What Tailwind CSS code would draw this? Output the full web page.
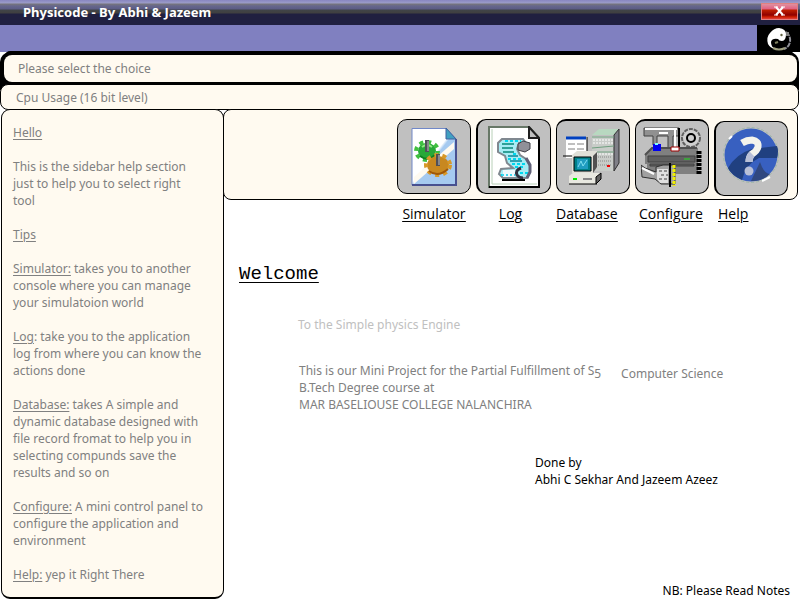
<!DOCTYPE html>
<html lang="en">
<head>
<meta charset="utf-8">
<meta name="viewport" content="width=device-width, initial-scale=1">
<title>Physicode - By Abhi &amp; Jazeem</title>
<script src="https://cdn.jsdelivr.net/npm/@tailwindcss/browser@4"></script>
</head>
<body class="flex min-h-screen flex-col bg-white font-['Noto_Sans',sans-serif] text-[12px] leading-[17px] text-[#808080]">
<header>
  <div class="flex h-[25px] items-center justify-between bg-[linear-gradient(to_bottom,#8886c0_0px,#9c9cc8_3px,#77757b_4px,#66668c_6px,#5c5c84_9px,#404448_10px,#404040_13px,#202040_14px,#202040_25px)] pl-[23px] pr-[2px]">
    <h1 class="font-['Noto_Sans',sans-serif] text-[13px] font-bold text-white">Physicode - By Abhi &amp; Jazeem</h1>
    <button type="button" aria-label="Close" class="mb-[3px] flex h-[17px] w-[37px] items-center justify-center border border-[#e08080] bg-[linear-gradient(to_bottom,#e090a0_0px,#e06080_5px,#c02000_6px,#900000_11px,#d02000_13px,#e04040_15px)]">
      <svg class="h-[10px] w-[11px]" viewBox="0 0 11 10" fill="none" stroke="#fff" stroke-width="2"><path d="M2 1l7 8M9 1L2 9"/><path d="M0 1h4M7 1h4M0 9h4M7 9h4" stroke-width="1"/></svg>
    </button>
  </div>
  <div class="flex h-[27px] justify-end bg-[#8080c0]">
    <div class="flex w-[43px] items-center justify-center bg-black">
      <svg class="mt-[2px] h-[25px] w-[26px]" viewBox="0 0 26 25"><circle cx="13" cy="13" r="11" fill="#000"/><path d="M20 5Q25 9 24 15Q23 20 18 22" fill="none" stroke="#909098" stroke-width="2" stroke-dasharray="5 1"/><path d="M2 17Q0 10 4 6Q8 1 13 1Q20 2 20 7Q20 14 16 14Q13 14 12 12Q6 11 5 15Q5 20 9 22Q4 21 2 17Z" fill="#fff"/><path d="M20 5h3v4h-3z" fill="#808080"/><circle cx="15.500" cy="8" r="1.200" fill="#606040"/><path d="M9 16l3-1" stroke="#808060" stroke-width="2"/><path d="M7 21q6 3 12 0" fill="none" stroke="#a0a080" stroke-width="2"/></svg>
    </div>
  </div>
</header>
<div class="mr-[1px] rounded-t-[10px] bg-black pt-[3px] pb-[2px] pl-[4px] pr-[2px] shadow-[0_-6px_0_-5px_#000]">
  <p class="flex h-[27px] items-center rounded-[8px] bg-[#fffaf0] pl-[14px]">Please select the choice</p>
</div>
<div class="mr-[1px] bg-[linear-gradient(to_bottom,#000_6px,#fff_6px)]">
  <p class="flex h-[26px] items-center rounded-[8px] border border-black bg-[#fffaf0] pl-[15px]">Cpu Usage (16 bit level)</p>
</div>
<div class="flex flex-1 pb-[1px]">
  <aside class="-mt-px ml-[1px] flex w-[223px] shrink-0 flex-col gap-[17px] rounded-[9px] border border-b-2 border-black bg-[#fffaf0] pt-[14px] pr-[8px] pb-[13px] pl-[11px]">
    <h2 class="underline underline-offset-2">Hello</h2>
    <p>This is the sidebar help section<br>just to help you to select right<br>tool</p>
    <h2 class="underline underline-offset-2">Tips</h2>
    <p><u class="underline-offset-2">Simulator:</u> takes you to another<br>console where you can manage<br>your simulatoion world</p>
    <p><u class="underline-offset-2">Log</u>: take you to the application<br>log from where you can know the<br>actions done</p>
    <p><u class="underline-offset-2">Database:</u> takes A simple and<br>dynamic database designed with<br>file record fromat to help you in<br>selecting compunds save the<br>results and so on</p>
    <p><u class="underline-offset-2">Configure:</u> A mini control panel to<br>configure the application and<br>environment</p>
    <p><u class="underline-offset-2">Help:</u> yep it Right There</p>
  </aside>
  <main class="-ml-px flex min-w-0 flex-1 flex-col">
    <div class="-mt-px mr-[2px] flex justify-end gap-[5px] rounded-[8px] border border-black bg-[#fffaf0] pt-[9px] pr-[9px] pb-[3px]">
      <button type="button" aria-label="Simulator" class="flex h-[75px] w-[74px] items-center justify-center rounded-[10px] border border-black bg-[#c0c0c0]">
        <svg class="h-[60px] w-[48px]" viewBox="0 0 48 60"><defs><linearGradient id="pg" x1="0" y1="0" x2="1" y2="1"><stop offset=".48" stop-color="#fff"/><stop offset=".52" stop-color="#a6caf0"/></linearGradient></defs><path d="M2 1.500H36L46 12V58H2Z" fill="url(#pg)" stroke="#7088c8" stroke-width="1"/><path d="M2 58H46V12" fill="none" stroke="#485090" stroke-width="2"/><path d="M4 57V50L44 15V22Z" fill="#fffaf0"/><path d="M36 1V12H46Z" fill="#40a0c0" stroke="#4060a0"/><ellipse cx="17" cy="24" rx="9" ry="8" fill="#28a838"/><ellipse cx="17" cy="24" rx="11" ry="9" fill="none" stroke="#40c040" stroke-width="4" stroke-dasharray="4 3.850"/><path d="M12 20q5-4 10 0" stroke="#90e880" stroke-width="2" fill="none"/><path d="M10 29q8 6 15-1" stroke="#108020" stroke-width="2" fill="none"/><ellipse cx="28" cy="38" rx="11" ry="9" fill="#c88820"/><ellipse cx="28" cy="38" rx="12" ry="10" fill="none" stroke="#d89828" stroke-width="4" stroke-dasharray="4 4"/><path d="M19 44q9 7 19-2" stroke="#a05808" stroke-width="2" fill="none"/><path d="M17 13v12M28 27v12" stroke="#505058" stroke-width="4"/><path d="M18 14v10M29 28v10" stroke="#c0c0c0" stroke-width="1"/></svg>
      </button>
      <button type="button" aria-label="Log" class="flex h-[75px] w-[75px] items-center justify-center rounded-[10px] border border-l-2 border-black bg-[#c0c0c0]">
        <svg class="h-[62px] w-[52px]" viewBox="0 0 52 62"><path d="M1 1H41L51 12V61H1Z" fill="#fff" stroke="#687868" stroke-width="2"/><path d="M1 61H51V12" fill="none" stroke="#000" stroke-width="2"/><path d="M4 3v55h45" fill="none" stroke="#b8d0b8"/><path d="M41 1V12H51Z" fill="#c0c0c0" stroke="#202020" stroke-width="2"/><path d="M14 13H35L38 17H31L29 23L32 29L38 33L42 40V46L39 52H15L11 48L13 43L25 42L19 37L17 30L10 26V17Z" fill="#a8ecf4" stroke="#808890" stroke-width="2"/><path d="M14 18H26M14 22H25M15 26H26" stroke="#30a098" stroke-width="2"/><path d="M20 30H30M22 35H34" stroke="#30a0b0" stroke-width="2"/><path d="M17 15H33M25 28H30M20 33H34M24 38H38M27 41H37M32 47H40M13 49H26" stroke="#00d8f0" stroke-width="2" stroke-dasharray="3 2"/><path d="M30 18L35 15L42 17V23L37 26L30 24Z" fill="#909098" stroke="#404048"/><path d="M38 32L42 39V46L39 52" fill="none" stroke="#606078" stroke-width="3"/><path d="M15 44H27V51H15Z" fill="#f0f8fc"/><path d="M14 49H27" stroke="#40d8f0" stroke-width="2" stroke-dasharray="2 2"/><path d="M33 42Q27 44 29 49Q31 52 35 52" fill="none" stroke="#303040" stroke-width="3"/><path d="M14 54H37" stroke="#000" stroke-width="2"/></svg>
      </button>
      <button type="button" aria-label="Database" class="flex h-[75px] w-[74px] items-center justify-center rounded-[10px] border border-t-2 border-black bg-[#c0c0c0]">
        <svg class="h-[60px] w-[60px]" viewBox="0 0 60 60"><path d="M29 8L36 2H56V34L49 45H29Z" fill="#c0c0c0"/><path d="M29 8L36 2H56L51 8Z" fill="#b8d8c0"/><path d="M51 8L56 2V36L51 44Z" fill="#808088" stroke="#303030"/><path d="M29 9H50V44H29Z" fill="#c8ccc8"/><path d="M30 13H50M30 16H50M30 27H50" stroke="#fff" stroke-dasharray="2 1"/><path d="M29 10H51M29 21L51 19M30 25H51" stroke="#70a080"/><path d="M31 30H49M31 34H49M31 38H49" stroke="#888" stroke-dasharray="1 1"/><path d="M44 39h3" stroke="#f00000" stroke-width="2"/><path d="M3 10H24V31H3Z" fill="#fff"/><path d="M24 10V29H0" fill="none" stroke="#000" stroke-width="1"/><path d="M3 11H23" stroke="#0040c0" stroke-width="3"/><path d="M5 17h7M14 17h7M5 22h7M14 22h7" stroke="#808080"/><path d="M9 28L14 24H34V39L30 46H9Z" fill="#e0e0d8"/><path d="M30 29L34 25V40L30 46Z" fill="#505050"/><path d="M11 30H28V44H11Z" fill="#008088" stroke="#000"/><path d="M14 32H25V42H14Z" fill="#209cc0"/><path d="M15 40l3-6 2 5 4-6" fill="none" stroke="#80e0f0"/><path d="M6 49L10 46H38V52L34 57H6Z" fill="#e8e8e0"/><path d="M33 57L38 52V46L33 50ZM6 57H34" fill="#606060" stroke="#000"/><path d="M10 52h4" stroke="#00f000" stroke-width="2"/><path d="M20 52h9" stroke="#888" stroke-width="2"/></svg>
      </button>
      <button type="button" aria-label="Configure" class="flex h-[75px] w-[74px] items-center justify-center rounded-[10px] border border-t-2 border-black bg-[#c0c0c0]">
        <svg class="h-[62px] w-[62px]" viewBox="0 0 62 62"><path d="M3 2H38V10H32V25H27V10H16V19H12V10H3Z" fill="#909090" stroke="#404040" stroke-width="1"/><path d="M4 3H36M18 7H27" stroke="#fff" stroke-width="2"/><path d="M38 2V24" stroke="#000" stroke-width="2"/><path d="M34 2V24" stroke="#fff" stroke-width="2"/><circle cx="50" cy="12" r="9" fill="#d0d0d0" stroke="#606060" stroke-width="2" stroke-dasharray="4 1"/><circle cx="50" cy="12" r="4" fill="#d0d0d0" stroke="#000" stroke-width="2"/><path d="M4 28L12 22H57V48H6V38H4Z" fill="#808080"/><path d="M4 29L11 22H56" fill="none" stroke="#505050" stroke-width="2"/><path d="M7 30H54V36H7ZM9 38H53V40H9Z" fill="#606060" stroke="#404040"/><path d="M58 25V48" stroke="#000" stroke-width="5" stroke-dasharray="3 1"/><path d="M43 33h6" stroke="#20e020"/><path d="M12 18h8v7h-8z" fill="#0000f0"/><path d="M14 18h3" stroke="#80ffff" stroke-width="2"/><path d="M30 21h8v4h-8z" fill="#fff" stroke="#a00000"/><path d="M0 39L4 42L15 46V41L22 39H34V58H20L14 53L1 51Z" fill="#a0a0a0" stroke="#303030" stroke-width="1"/><path d="M1 42L13 48" stroke="#fff" stroke-width="2"/><path d="M16 43H27V57H19L16 53Z" fill="#e0e0e0"/><path d="M18 45h8M20 49h7M18 53h8" stroke="#909090" stroke-width="2" stroke-dasharray="3 2"/><path d="M29 37V61" stroke="#000" stroke-width="2"/><path d="M33 39V60" stroke="#f0f000" stroke-width="3" stroke-dasharray="3 1"/></svg>
      </button>
      <button type="button" aria-label="Help" class="mt-[2px] flex h-[75px] w-[74px] items-center justify-center rounded-[10px] border border-l-2 border-black bg-[#c0c0c0] pb-[8px] pr-[2px]">
        <svg class="h-[58px] w-[58px]" viewBox="0 0 58 58"><circle cx="29" cy="29" r="27.500" fill="none" stroke="#a0b8a8" stroke-dasharray="3 2"/><circle cx="29" cy="29" r="26.500" fill="#3860c0"/><path d="M6 42Q14 28 30 23L55 20Q57 25 55 32L37 32Q24 38 20 54Q9 49 6 42Z" fill="#204080"/><path d="M38 36Q42 48 48 48Q40 56 29 55Z" fill="#304880"/><path d="M7 13l3-3M40 55l8-4" stroke="#fff" stroke-width="2"/><path d="M20 17Q25 14 30 14Q37 15 36 21Q35 25 30 28Q27 31 27 36" fill="none" stroke="#f4f4ec" stroke-width="7"/><path d="M30 28Q27 31 27 36" fill="none" stroke="#b8c0d8" stroke-width="7"/><circle cx="27" cy="45" r="4.500" fill="#b8c0d8"/></svg>
      </button>
    </div>
    <nav class="mr-[2px] flex justify-end gap-[5px] pt-[4px] pr-[10px] font-['Open_Sans',sans-serif] text-[14px] leading-[20px] text-black underline underline-offset-2">
      <a href="#simulator" class="w-[74px] text-center">Simulator</a>
      <a href="#log" class="w-[75px] pr-[6px] text-center">Log</a>
      <a href="#database" class="w-[74px]">Database</a>
      <a href="#configure" class="w-[74px] pl-[4px]">Configure</a>
      <a href="#help" class="w-[74px] pl-[4px]">Help</a>
    </nav>
    <h2 class="mt-[38px] ml-[16px] font-['Liberation_Mono',monospace] text-[19px] leading-[24px] text-black underline decoration-1 underline-offset-3">Welcome</h2>
    <p class="mt-[30px] ml-[75px] text-[#c0c0c0]">To the Simple physics Engine</p>
    <div class="mt-[29px] ml-[76px] flex gap-[20px]">
      <p>This is our Mini Project for the Partial Fulfillment of S<sub class="text-[12px] leading-none">5</sub><br>B.Tech Degree course at<br>MAR BASELIOUSE COLLEGE NALANCHIRA</p>
      <p class="pt-[3px]">Computer Science</p>
    </div>
    <p class="mt-[41px] mr-[62px] w-[203px] self-end text-black">Done by<br>Abhi C Sekhar And Jazeem Azeez</p>
    <p class="mt-auto mr-[10px] self-end text-black">NB: Please Read Notes</p>
  </main>
</div>
</body>
</html>
